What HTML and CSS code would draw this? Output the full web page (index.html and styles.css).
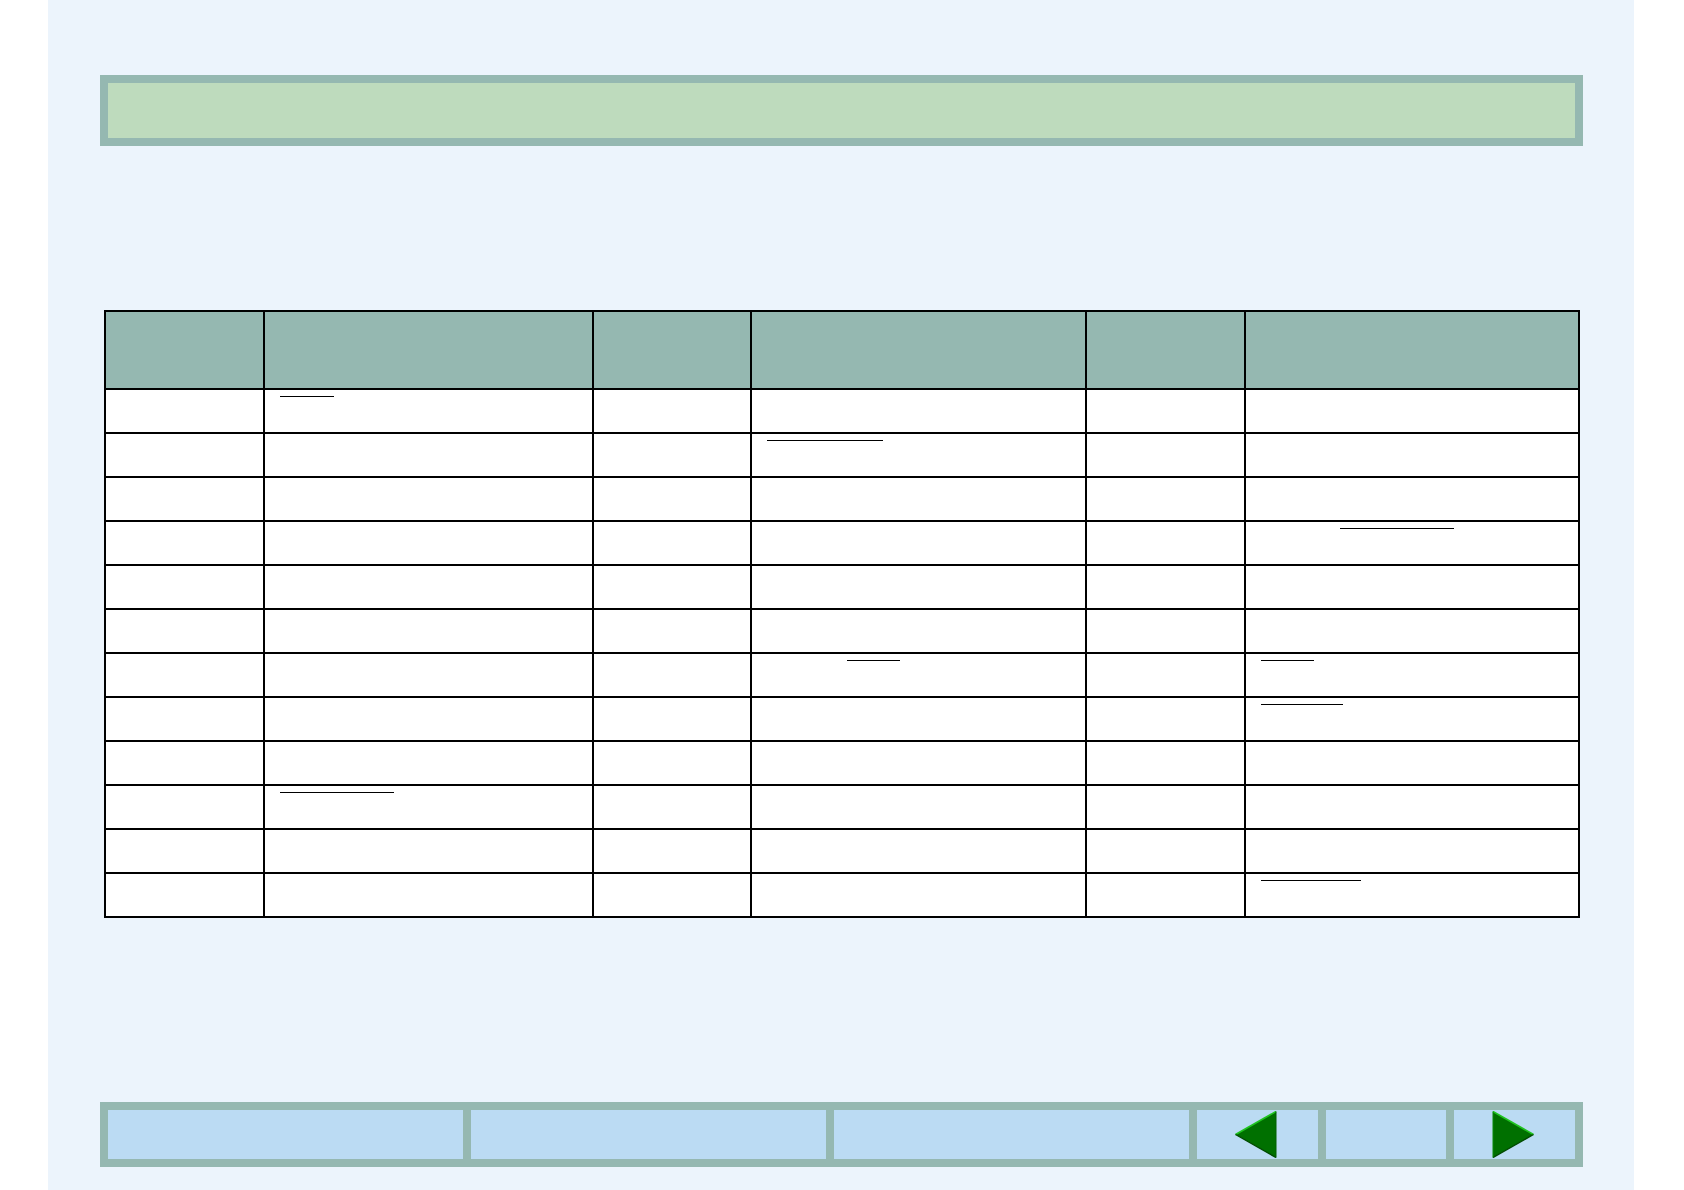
FILE: index.html
```html
<!DOCTYPE html>
<html lang="en">
<head>
  <meta charset="UTF-8">
  <meta name="viewport" content="width=device-width, initial-scale=1.0">
  <title>Table</title>
  <link rel="stylesheet" href="styles.css">
</head>
<body>
  <div class="page">
    <div class="title-bar"></div>

    <table class="grid">
      <colgroup>
        <col class="c-narrow"><col class="c-wide"><col class="c-narrow2"><col class="c-wide2"><col class="c-narrow3"><col class="c-wide3">
      </colgroup>
      <thead>
        <tr><th></th><th></th><th></th><th></th><th></th><th></th></tr>
      </thead>
      <tbody>
        <tr><td></td><td><span class="link w54"></span></td><td></td><td></td><td></td><td></td></tr>
        <tr><td></td><td></td><td></td><td><span class="link w116"></span></td><td></td><td></td></tr>
        <tr><td></td><td></td><td></td><td></td><td></td><td></td></tr>
        <tr><td></td><td></td><td></td><td></td><td></td><td><span class="link w114 shifted-far"></span></td></tr>
        <tr><td></td><td></td><td></td><td></td><td></td><td></td></tr>
        <tr><td></td><td></td><td></td><td></td><td></td><td></td></tr>
        <tr><td></td><td></td><td></td><td><span class="link w53 shifted"></span></td><td></td><td><span class="link w53"></span></td></tr>
        <tr><td></td><td></td><td></td><td></td><td></td><td><span class="link w82"></span></td></tr>
        <tr><td></td><td></td><td></td><td></td><td></td><td></td></tr>
        <tr><td></td><td><span class="link w114"></span></td><td></td><td></td><td></td><td></td></tr>
        <tr><td></td><td></td><td></td><td></td><td></td><td></td></tr>
        <tr><td></td><td></td><td></td><td></td><td></td><td><span class="link w100"></span></td></tr>
      </tbody>
    </table>

    <div class="nav-bar">
      <div class="nav-cell"></div>
      <div class="nav-cell"></div>
      <div class="nav-cell"></div>
      <div class="nav-cell">
        <svg class="arrow" width="42" height="47" viewBox="0 0 42 47">
          <polygon points="41,0.5 0.5,23.5 41,46.5" fill="#007000"/>
          <polyline points="0.5,23.5 41,0.5" fill="none" stroke="#20c420" stroke-width="1.6"/>
          <polyline points="0.5,23.5 41,46.5" fill="none" stroke="#004a00" stroke-width="1.4"/>
          <polyline points="41,0.5 41,46.5" fill="none" stroke="#006000" stroke-width="1"/>
        </svg>
      </div>
      <div class="nav-cell"></div>
      <div class="nav-cell">
        <svg class="arrow" width="42" height="47" viewBox="0 0 42 47">
          <polygon points="1,0.5 41.5,23.5 1,46.5" fill="#007000"/>
          <polyline points="1,0.5 41.5,23.5" fill="none" stroke="#20c420" stroke-width="1.6"/>
          <polyline points="41.5,23.5 1,46.5" fill="none" stroke="#004a00" stroke-width="1.4"/>
          <polyline points="1,0.5 1,46.5" fill="none" stroke="#0a8a0a" stroke-width="1"/>
        </svg>
      </div>
    </div>
  </div>
</body>
</html>
```

FILE: styles.css
```css
body {
  margin: 0;
  background-color: #ffffff;
  font-family: 'Liberation Sans', Arial, sans-serif;
}
.page {
  margin-left: 48px;
  width: 1586px;
  height: 1190px;
  background-color: #ecf4fc;
  padding-top: 75px;
  box-sizing: border-box;
  display: flex;
  flex-direction: column;
  overflow: hidden;
}
.title-bar {
  margin-left: 52px;
  width: 1483px;
  height: 71px;
  box-sizing: border-box;
  border: 8px solid #95b8b1;
  background-color: #bedbbd;
}
.grid {
  margin-top: 164px;
  margin-left: 56px;
  width: 1474px;
  table-layout: fixed;
  border-collapse: collapse;
  background-color: #ffffff;
}
.c-narrow { width: 159px; }
.c-wide { width: 329px; }
.c-narrow2 { width: 158px; }
.c-wide2 { width: 335px; }
.c-narrow3 { width: 159px; }
.c-wide3 { width: 334px; }
.grid th,
.grid td {
  border: 2px solid #000000;
  padding: 6px 0 0 15px;
  vertical-align: top;
  text-align: left;
}
.grid th {
  height: 70px;
  background-color: #95b8b1;
}
.grid td {
  height: 36px;
}
.link {
  display: block;
  height: 0;
  border-top: 1px solid #000000;
}
.link.shifted { margin-left: 80px; }
.link.shifted-far { margin-left: 79px; }
.w53 { width: 53px; }
.w54 { width: 54px; }
.w82 { width: 82px; }
.w100 { width: 100px; }
.w114 { width: 114px; }
.w116 { width: 116px; }
.nav-bar {
  margin-top: 184px;
  margin-left: 52px;
  width: 1483px;
  height: 65px;
  box-sizing: border-box;
  padding: 8px;
  background-color: #95b8b1;
  display: grid;
  grid-template-columns: 355px 355px 355px 121px 120px 121px;
  column-gap: 8px;
}
.nav-cell {
  background-color: #bbdbf3;
  display: flex;
  align-items: center;
  justify-content: center;
}
.arrow {
  display: block;
  margin-right: 4px;
}
```
